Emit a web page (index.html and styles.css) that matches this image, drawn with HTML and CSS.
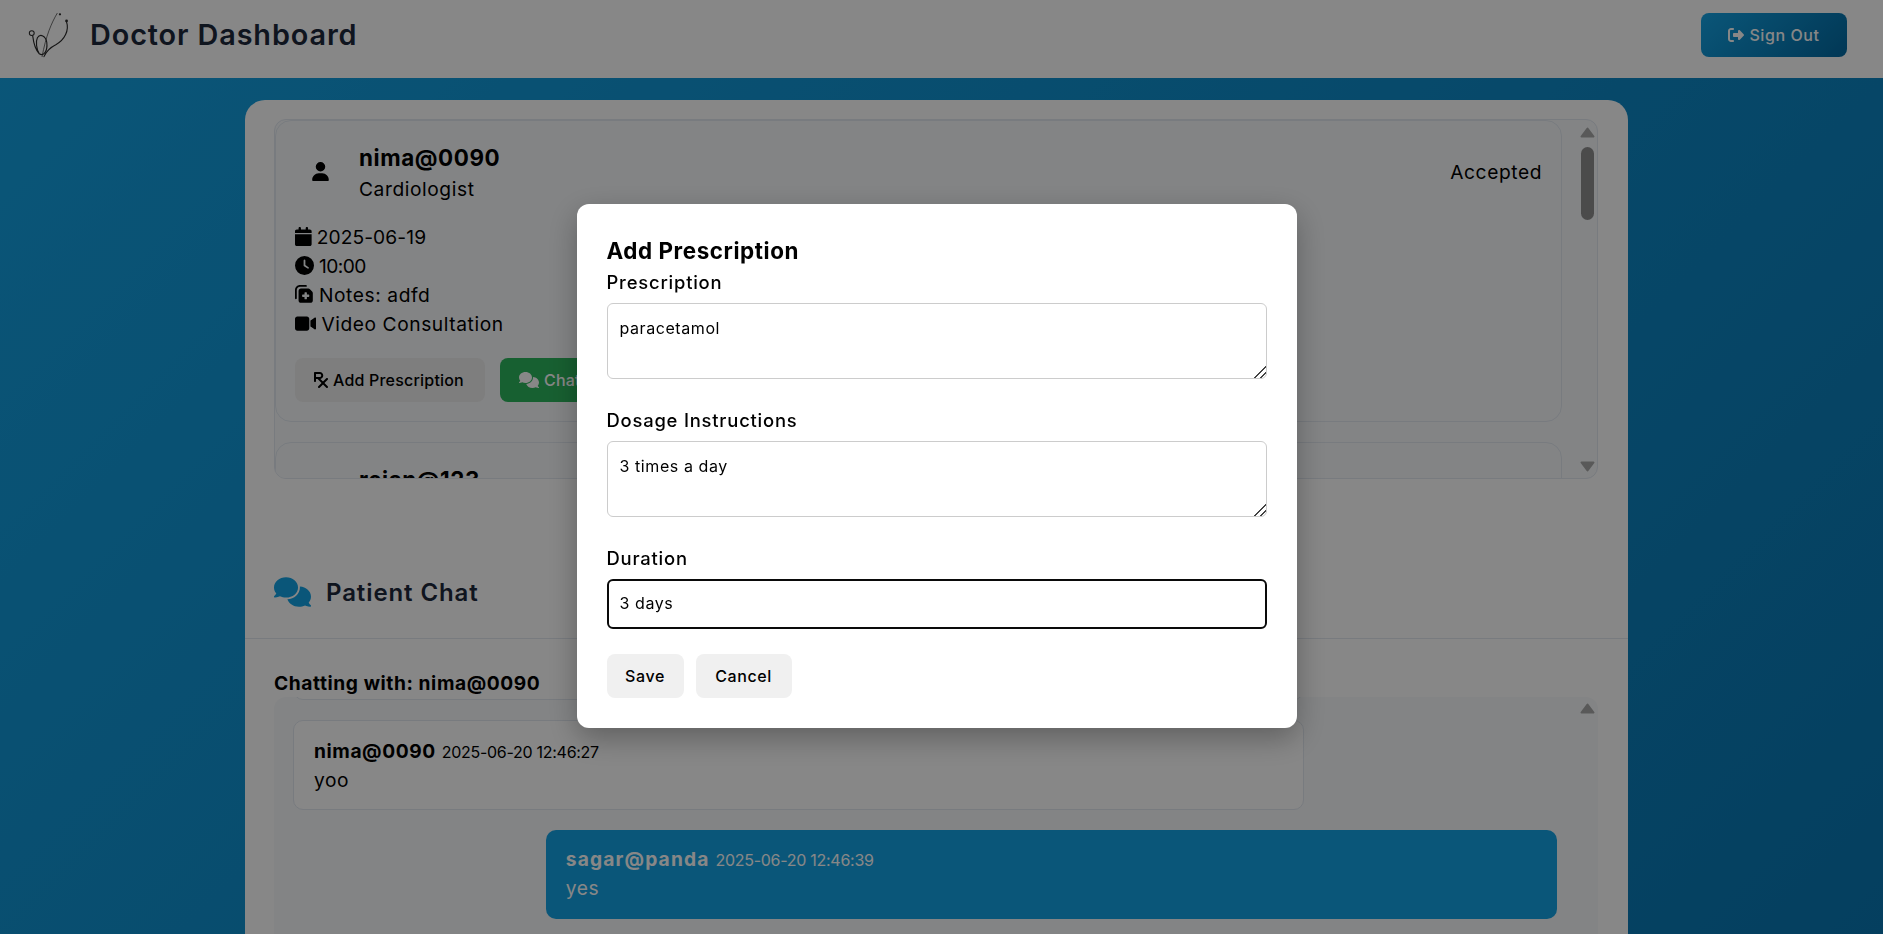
FILE: index.html
```html
<!DOCTYPE html>
<html lang="en">
<head>
<meta charset="utf-8">
<title>Doctor Dashboard</title>
<link rel="stylesheet" href="styles.css">
</head>
<body>
<header class="topbar">
  <div class="brand">
    <svg class="logo" viewBox="0 0 50 50" fill="none" stroke="#2a2a2a" stroke-linecap="round">
      <path d="M31 2C25 12 19 26 15 48" stroke-width=".7"/>
      <path d="M41 11C44 20 39 30 30 35C24 38 19 43 17 48" stroke-width="1.2"/>
      <path d="M5 26C6 34 8 41 12 45C17 48 21 42 20 33C19 26 13 23 10 28C8 32 9 40 12 45" stroke-width="1.2"/>
      <circle cx="4" cy="23" r="2.6" stroke-width="1.1"/>
      <circle cx="34" cy="3" r="1.2" fill="#2a2a2a" stroke="none"/>
      <circle cx="41" cy="10" r="1.5" fill="#2a2a2a" stroke="none"/>
    </svg>
    <h1 class="brand-title">Doctor Dashboard</h1>
  </div>
  <button class="signout">
    <svg class="ic" viewBox="0 0 512 512"><path d="M377.9 105.9L500.7 228.7c7.2 7.2 11.3 17.1 11.3 27.3s-4.1 20.1-11.3 27.3L377.9 406.1c-6.4 6.4-15 9.9-24 9.9c-18.7 0-33.9-15.2-33.9-33.9l0-62.1-128 0c-17.7 0-32-14.3-32-32l0-64c0-17.7 14.3-32 32-32l128 0 0-62.1c0-18.7 15.2-33.9 33.9-33.9c9 0 17.6 3.6 24 9.9zM160 96L96 96c-17.7 0-32 14.3-32 32l0 256c0 17.7 14.3 32 32 32l64 0c17.7 0 32 14.3 32 32s-14.3 32-32 32l-64 0c-53 0-96-43-96-96L0 128C0 75 43 32 96 32l64 0c17.7 0 32 14.3 32 32s-14.3 32-32 32z"/></svg>
    Sign Out
  </button>
</header>

<main class="card">
  <section class="appointments">
    <div class="list-frame">
      <div class="list">
        <article class="item">
          <div class="item-head">
            <div class="avatar"><svg class="ic-user" viewBox="0 0 448 512"><path d="M224 256A128 128 0 1 0 224 0a128 128 0 1 0 0 256zm-45.7 48C79.8 304 0 383.8 0 482.3C0 498.7 13.3 512 29.7 512H418.3c16.4 0 29.7-13.3 29.7-29.7C448 383.8 368.2 304 269.7 304H178.3z"/></svg></div>
            <div class="who">
              <div class="who-name">nima@0090</div>
              <div class="who-spec">Cardiologist</div>
            </div>
            <div class="status">Accepted</div>
          </div>
          <ul class="details">
            <li><svg class="d-ic" viewBox="0 0 448 512"><path d="M96 32V64H48C21.5 64 0 85.5 0 112v48H448V112c0-26.5-21.5-48-48-48H352V32c0-17.7-14.3-32-32-32s-32 14.3-32 32V64H160V32c0-17.7-14.3-32-32-32S96 14.3 96 32zM448 192H0V464c0 26.5 21.5 48 48 48H400c26.5 0 48-21.5 48-48V192z"/></svg><span class="num-date">2025-06-19</span></li>
            <li><svg class="d-ic" viewBox="0 0 512 512"><path d="M256 0a256 256 0 1 1 0 512A256 256 0 1 1 256 0zM232 120V256c0 8 4 15.5 10.7 20l96 64c11 7.4 25.9 4.4 33.3-6.7s4.4-25.9-6.7-33.3L280 243.2V120c0-13.3-10.7-24-24-24s-24 10.7-24 24z"/></svg><span class="num-time">10:00</span></li>
            <li><svg class="d-ic" viewBox="0 0 512 512"><g transform="translate(0 512) scale(1 -1)"><path d="M96 352V96c0-35.3 28.7-64 64-64H416c35.3 0 64 28.7 64 64V293.5c0 17-6.7 33.3-18.7 45.3l-58.5 58.5c-12 12-28.3 18.7-45.3 18.7H160c-35.3 0-64-28.7-64-64zM272 128c-8.8 0-16 7.2-16 16v48H208c-8.8 0-16 7.2-16 16v32c0 8.8 7.2 16 16 16h48v48c0 8.8 7.2 16 16 16h32c8.8 0 16-7.2 16-16V256h48c8.8 0 16-7.2 16-16V208c0-8.8-7.2-16-16-16H320V144c0-8.8-7.2-16-16-16H272zm24 336c13.3 0 24 10.7 24 24s-10.7 24-24 24H136C60.9 512 0 451.1 0 376V152c0-13.3 10.7-24 24-24s24 10.7 24 24l0 224c0 48.6 39.4 88 88 88H296z"/></g></svg>Notes: adfd</li>
            <li><svg class="d-ic" viewBox="0 0 576 512"><path d="M0 128C0 92.7 28.7 64 64 64H320c35.3 0 64 28.7 64 64V384c0 35.3-28.7 64-64 64H64c-35.3 0-64-28.7-64-64V128zM559.1 99.8c10.4 5.6 16.9 16.4 16.9 28.2V384c0 11.8-6.5 22.6-16.9 28.2s-23 5-32.9-1.6l-96-64L416 337.1V320 192 174.9l14.2-9.5 96-64c9.8-6.5 22.4-7.2 32.9-1.6z"/></svg>Video Consultation</li>
          </ul>
          <div class="actions">
            <button class="btn btn-gray"><svg class="b-ic" viewBox="0 0 448 512"><path d="M32 0C14 0 0 14 0 32V288c0 18 14 32 32 32s32-14 32-32V224h50.7l128 128L137.4 457.4c-12.5 12.5-12.5 32.8 0 45.3s32.8 12.5 45.3 0L288 397.3l105.4 105.4c12.5 12.5 32.8 12.5 45.3 0s12.5-32.8 0-45.3L333.3 352 438.6 246.6c12.5-12.5 12.5-32.8 0-45.3s-32.8-12.5-45.3 0L288 306.7 203.1 221.8C256 210 296 163 296 112C296 50 246 0 184 0H32zM184 160H64V64H184c26.5 0 48 21.5 48 48s-21.5 48-48 48z"/></svg>Add Prescription</button>
            <button class="btn btn-green"><svg class="b-ic-wide" viewBox="0 0 640 512"><path d="M208 352c114.9 0 208-78.8 208-176S322.9 0 208 0S0 78.8 0 176c0 38.6 14.7 74.3 39.6 103.4c-3.5 9.4-8.7 17.7-14.2 24.7c-4.8 6.2-9.7 11-13.3 14.3c-1.8 1.6-3.3 2.9-4.3 3.7c-.5 .4-.9 .7-1.1 .8l-.2 .2 0 0 0 0C1 327.2-1.4 334.4 .8 340.9S9.1 352 16 352c21.8 0 43.8-5.6 62.1-12.5c9.2-3.5 17.8-7.4 25.3-11.4C134.1 343.3 169.8 352 208 352zM448 176c0 112.3-99.1 196.9-216.5 207C255.8 457.4 336.4 512 432 512c38.2 0 73.9-8.7 104.7-23.9c7.5 4 16 7.9 25.2 11.4c18.3 6.9 40.3 12.5 62.1 12.5c6.9 0 13.1-4.5 15.2-11.1c2.1-6.6-.2-13.8-5.8-17.9l0 0 0 0-.2-.2c-.2-.2-.6-.4-1.1-.8c-1-.8-2.5-2-4.3-3.7c-3.6-3.3-8.5-8.1-13.3-14.3c-5.5-7-10.7-15.4-14.2-24.7c24.9-29 39.6-64.7 39.6-103.4c0-92.8-84.9-168.9-192.6-175.5c.4 5.1 .6 10.3 .6 15.5z"/></svg>Chat</button>
          </div>
        </article>
        <article class="item">
          <div class="item-head">
            <div class="avatar"></div>
            <div class="who"><div class="who-name">rejan@123</div><div class="who-spec">Cardiologist</div></div>
          </div>
        </article>
      </div>
      <div class="scrollbar">
        <svg class="arrow" viewBox="0 0 15 11"><path d="M7.5 1.5L13.5 9.5H1.5Z"/></svg>
        <span class="thumb"></span>
        <span class="grow"></span>
        <svg class="arrow" viewBox="0 0 15 11"><path d="M7.5 9.5L13.5 1.5H1.5Z"/></svg>
      </div>
    </div>
  </section>

  <div class="chat-head">
    <svg class="chat-ic" viewBox="0 0 640 512"><path d="M208 352c114.9 0 208-78.8 208-176S322.9 0 208 0S0 78.8 0 176c0 38.6 14.7 74.3 39.6 103.4c-3.5 9.4-8.7 17.7-14.2 24.7c-4.8 6.2-9.7 11-13.3 14.3c-1.8 1.6-3.3 2.9-4.3 3.7c-.5 .4-.9 .7-1.1 .8l-.2 .2 0 0 0 0C1 327.2-1.4 334.4 .8 340.9S9.1 352 16 352c21.8 0 43.8-5.6 62.1-12.5c9.2-3.5 17.8-7.4 25.3-11.4C134.1 343.3 169.8 352 208 352zM448 176c0 112.3-99.1 196.9-216.5 207C255.8 457.4 336.4 512 432 512c38.2 0 73.9-8.7 104.7-23.9c7.5 4 16 7.9 25.2 11.4c18.3 6.9 40.3 12.5 62.1 12.5c6.9 0 13.1-4.5 15.2-11.1c2.1-6.6-.2-13.8-5.8-17.9l0 0 0 0-.2-.2c-.2-.2-.6-.4-1.1-.8c-1-.8-2.5-2-4.3-3.7c-3.6-3.3-8.5-8.1-13.3-14.3c-5.5-7-10.7-15.4-14.2-24.7c24.9-29 39.6-64.7 39.6-103.4c0-92.8-84.9-168.9-192.6-175.5c.4 5.1 .6 10.3 .6 15.5z"/></svg>
    <h2 class="chat-title">Patient Chat</h2>
  </div>

  <section class="chat-body">
    <h3 class="chat-with">Chatting with: nima@0090</h3>
    <div class="chat-frame">
      <div class="messages">
        <div class="msg msg-in msg-clipped"><strong class="msg-name">nima@0090</strong></div>
        <div class="msg msg-in"><div><strong class="msg-name">nima@0090</strong> <span class="msg-time">2025-06-20 12:46:27</span></div><div class="msg-text">yoo</div></div>
        <div class="msg msg-out"><div><strong class="msg-name">sagar@panda</strong> <span class="msg-time">2025-06-20 12:46:39</span></div><div class="msg-text">yes</div></div>
      </div>
      <div class="scrollbar scrollbar-chat"><svg class="arrow" viewBox="0 0 15 11"><path d="M7.5 1.5L13.5 9.5H1.5Z"/></svg></div>
    </div>
  </section>
</main>

<div class="overlay">
  <form class="modal">
    <h2 class="modal-title">Add Prescription</h2>
    <label class="field-label" for="rx">Prescription</label>
    <textarea class="field field-area" id="rx">paracetamol</textarea>
    <label class="field-label field-gap" for="dose">Dosage Instructions</label>
    <textarea class="field field-area" id="dose">3 times a day</textarea>
    <label class="field-label field-gap-last" for="dur">Duration</label>
    <input class="field field-focus" id="dur" value="3 days">
    <div class="modal-actions">
      <button type="button" class="modal-btn modal-save">Save</button>
      <button type="button" class="modal-btn modal-cancel">Cancel</button>
    </div>
  </form>
</div>
</body>
</html>
```

FILE: styles.css
```css
* { box-sizing: border-box; }
html, body { margin: 0; height: 100%; }
body {
  height: 934px;
  overflow: hidden;
  font-family: Inter, "Liberation Sans", sans-serif;
  letter-spacing: .03em;
  font-size: 19.2px;
  line-height: 1.5;
  color: #000;
  background: linear-gradient(135deg, #14a3e4, #0a78b4);
}
h1, h2, h3, ul { margin: 0; padding: 0; }
button { font-family: inherit; letter-spacing: inherit; border: 0; }

.topbar {
  height: 78px;
  background: #fff;
  display: flex;
  align-items: center;
  justify-content: space-between;
  padding: 0 36px 8px 28px;
}
.brand { display: flex; align-items: center; gap: 15px; }
.logo { width: 47px; height: 50px; }
.brand-title { font-size: 28.8px; font-weight: 600; color: #1e293b; letter-spacing: .9px; }
.signout {
  width: 146px;
  height: 44px;
  border-radius: 8px;
  background: linear-gradient(135deg, #14a3e4, #0369a1);
  color: #fff;
  font-size: 16px;
  font-weight: 500;
  display: flex;
  align-items: center;
  justify-content: center;
  gap: 5px;
}
.ic { width: 16px; height: 16px; fill: #fff; }

.card {
  width: 1383px;
  margin: 22px 0 0 245px;
  background: #fff;
  border-radius: 20px;
  height: 900px;
}
.appointments { padding: 19px 30px 66px 29px; }
.list-frame {
  display: flex;
  height: 360px;
  border: 1px solid #e2e8f0;
  border-radius: 12px;
  background: #f8fafc;
  overflow: hidden;
}
.list { flex: 1; overflow: hidden; display: flex; flex-direction: column; gap: 20px; }
.item {
  flex: none;
  height: 302px;
  background: #f8fafc;
  border: 1px solid #e2e8f0;
  border-radius: 16px;
  padding: 20px 19px 20px 19px;
}
.item-head { display: flex; align-items: center; gap: 14px; }
.avatar { width: 50px; height: 50px; padding-bottom: 2px; display: flex; align-items: center; justify-content: center; }
.ic-user { width: 17px; height: 19px; }
.who { flex: 1; }
.who-name { font-size: 22.4px; font-weight: 700; }
.who-spec { font-size: 19.2px; }
.status { font-size: 19.2px; }
.details { list-style: none; margin-top: 19px; }
.details li { display: flex; align-items: center; gap: 5px; height: 29px; }
.d-ic { height: 19px; width: auto; flex: none; }
.num-date { letter-spacing: .1px; }
.num-time { letter-spacing: -.6px; }
.actions { display: flex; gap: 15px; margin-top: 20px; }
.btn {
  height: 44px;
  border-radius: 8px;
  font-size: 16px;
  font-weight: 500;
  letter-spacing: .2px;
  display: flex;
  align-items: center;
  gap: 5px;
  padding: 0 19px;
  white-space: nowrap;
}
.btn-gray { width: 190px; background: #eee; color: #000; }
.btn-green { background: #2db55d; color: #fff; width: 110px; }
.b-ic { height: 16px; width: 14px; flex: none; }
.b-ic-wide { height: 16px; width: 20px; fill: #fff; flex: none; }

.scrollbar {
  flex: none;
  width: 35px;
  display: flex;
  flex-direction: column;
  align-items: center;
  padding: 7px 0 6px 15px;
}
.arrow { width: 15px; height: 11px; fill: #a8a8a8; stroke: #a8a8a8; stroke-width: 2; stroke-linejoin: round; flex: none; }
.thumb { width: 13px; height: 73px; border-radius: 7px; background: #8f8f8f; margin-top: 9px; }
.grow { flex: 1; }

.chat-head {
  height: 94px;
  display: flex;
  align-items: center;
  gap: 15px;
  padding-left: 29px;
  border-bottom: 1px solid #e2e8f0;
}
.chat-ic { width: 37px; height: 30px; fill: #14a3e4; }
.chat-title { font-size: 24px; font-weight: 600; color: #1e293b; letter-spacing: .9px; padding-top: 2px; }

.chat-body { padding: 30px 30px 0 29px; }
.chat-with { font-size: 19.2px; font-weight: 700; line-height: 28px; }
.chat-frame { display: flex; height: 260px; background: #f8fafc; border-radius: 12px; overflow: hidden; }
.messages { flex: 1; display: flex; flex-direction: column; gap: 20px; padding: 0 19px; }
.msg { width: 80%; border-radius: 10px; flex: none; }
.msg-in { background: #fff; border: 1px solid #e2e8f0; height: 90px; padding: 16px 20px 14px; }
.msg-out { align-self: flex-end; background: #14a3e4; color: #fff; height: 89px; padding: 15px 20px 13px; }
.msg-out .msg-name { letter-spacing: 1.15px; }
.msg-clipped { margin-top: -87px; }
.msg-name { font-size: 19.2px; font-weight: 700; }
.msg-time { font-size: 16px; letter-spacing: -.28px; }
.msg-text { font-size: 19.2px; }
.scrollbar-chat { width: 22px; padding: 6px 0 0; }

.overlay {
  position: fixed;
  inset: 0;
  padding: 0 10px 2px 0;
  background: rgba(0, 0, 0, .47);
  display: flex;
  align-items: center;
  justify-content: center;
}
.modal {
  width: 720px;
  background: #fff;
  border-radius: 12px;
  padding: 30px;
  display: flex;
  flex-direction: column;
  box-shadow: 0 10px 30px rgba(0, 0, 0, .3);
}
.modal-title { font-size: 22.4px; font-weight: 700; line-height: 34px; }
.field-label { font-size: 18.4px; line-height: 27px; font-weight: 500; letter-spacing: .8px; padding-top: 1px; margin-bottom: 8px; height: 27px; }
.field-gap { margin-top: 27px; }
.field-gap-last { margin-top: 27px; }
.field {
  width: 660px;
  display: block;
  font-family: inherit;
  letter-spacing: inherit;
  font-size: 16px;
  line-height: 24px;
  color: #000;
  border: 1px solid #ccc;
  border-radius: 6px;
  padding: 12px;
  outline: 0;
  margin: 0;
}
.field-area { height: 76px; }
.field-area::-webkit-resizer {
  background: linear-gradient(135deg, transparent 58%, #444 58% 65%, transparent 65% 78%, #444 78% 85%, transparent 85%);
}
.field-focus { height: 50px; border: 2px solid #0a0a0a; padding: 0 11px 2px; }
.modal-actions { display: flex; gap: 12px; margin-top: 25px; }
.modal-btn { height: 44px; border-radius: 8px; background: #f0f0f0; color: #000; font-size: 16px; font-weight: 500; padding: 0; }
.modal-save { width: 77px; }
.modal-cancel { width: 96px; }
```
